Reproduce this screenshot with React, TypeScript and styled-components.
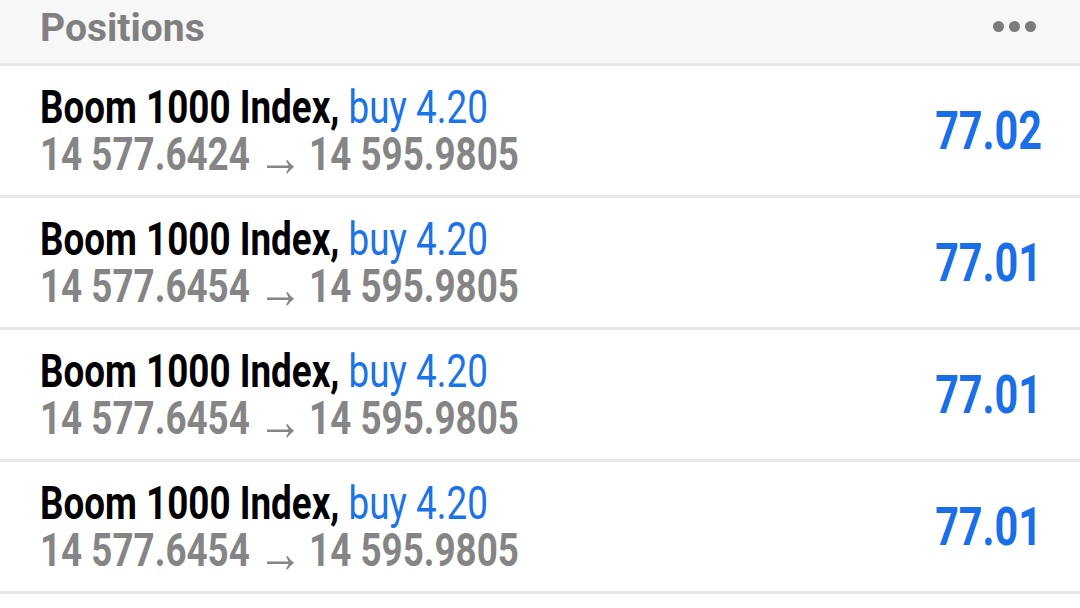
import styled, { createGlobalStyle } from "styled-components";

const GlobalStyle = createGlobalStyle`
  html, body {
    margin: 0;
    padding: 0;
    background: #ffffff;
  }
  body {
    font-family: Roboto, "Noto Sans", sans-serif;
    -webkit-font-smoothing: antialiased;
  }
`;

type Position = {
  id: number;
  symbol: string;
  side: string;
  volume: string;
  openPrice: string;
  currentPrice: string;
  profit: string;
};

const positions: Position[] = [
  { id: 1, symbol: "Boom 1000 Index", side: "buy", volume: "4.20", openPrice: "14 577.6424", currentPrice: "14 595.9805", profit: "77.02" },
  { id: 2, symbol: "Boom 1000 Index", side: "buy", volume: "4.20", openPrice: "14 577.6454", currentPrice: "14 595.9805", profit: "77.01" },
  { id: 3, symbol: "Boom 1000 Index", side: "buy", volume: "4.20", openPrice: "14 577.6454", currentPrice: "14 595.9805", profit: "77.01" },
  { id: 4, symbol: "Boom 1000 Index", side: "buy", volume: "4.20", openPrice: "14 577.6454", currentPrice: "14 595.9805", profit: "77.01" },
];

const Screen = styled.main`
  width: 1080px;
  min-height: 608px;
  background: #ffffff;
  overflow: hidden;
`;

const Header = styled.header`
  height: 63px;
  display: flex;
  align-items: center;
  justify-content: space-between;
  padding: 0 44px 0 40px;
  background: #f7f7f7;
  border-bottom: 3px solid #e7e7e7;
  box-sizing: content-box;
`;

const HeaderTitle = styled.h1`
  margin: 0;
  margin-top: -7px;
  font-size: 39px;
  font-weight: 700;
  color: #808080;
  line-height: 1;
`;

const MoreButton = styled.button`
  display: flex;
  gap: 5px;
  margin-top: -10px;
  padding: 0;
  border: 0;
  background: transparent;
  cursor: pointer;
`;

const Dot = styled.span`
  width: 11px;
  height: 11px;
  border-radius: 50%;
  background: #7b7b7b;
`;

const List = styled.ul`
  margin: 0;
  padding: 0;
  list-style: none;
`;

const Row = styled.li`
  height: 129px;
  display: flex;
  align-items: flex-start;
  justify-content: space-between;
  padding: 0 38px 0 40px;
  border-bottom: 3px solid #e7e7e7;
  box-sizing: content-box;
`;

const Info = styled.div`
  padding-top: 18px;
  display: grid;
`;

const Line = styled.div<{ $muted?: boolean }>`
  font-size: 46px;
  line-height: 47px;
  font-weight: 700;
  white-space: nowrap;
  color: ${({ $muted }) => ($muted ? "#858585" : "#000000")};
  transform: scaleX(0.8);
  transform-origin: left center;
`;

const Deal = styled.span`
  font-weight: 400;
  color: #1a73e8;
`;

const Arrow = styled.span`
  display: inline-block;
  font-weight: 400;
  font-size: 56px;
  line-height: 0;
  margin: 0 8px 0 10px;
  transform: translateY(6px);
`;

const Profit = styled.div`
  align-self: center;
  margin-top: 1px;
  font-size: 53px;
  font-weight: 700;
  color: #1a6fe6;
  line-height: 1;
  transform: scaleX(0.78);
  transform-origin: right center;
`;

export default function App() {
  return (
    <>
      <GlobalStyle />
      <Screen>
        <Header>
          <HeaderTitle>Positions</HeaderTitle>
          <MoreButton type="button" aria-label="More">
            <Dot />
            <Dot />
            <Dot />
          </MoreButton>
        </Header>
        <List>
          {positions.map((p) => (
            <Row key={p.id}>
              <Info>
                <Line>
                  {p.symbol}, <Deal>{p.side} {p.volume}</Deal>
                </Line>
                <Line $muted>
                  {p.openPrice}
                  <Arrow>→</Arrow>
                  {p.currentPrice}
                </Line>
              </Info>
              <Profit>{p.profit}</Profit>
            </Row>
          ))}
        </List>
      </Screen>
    </>
  );
}
